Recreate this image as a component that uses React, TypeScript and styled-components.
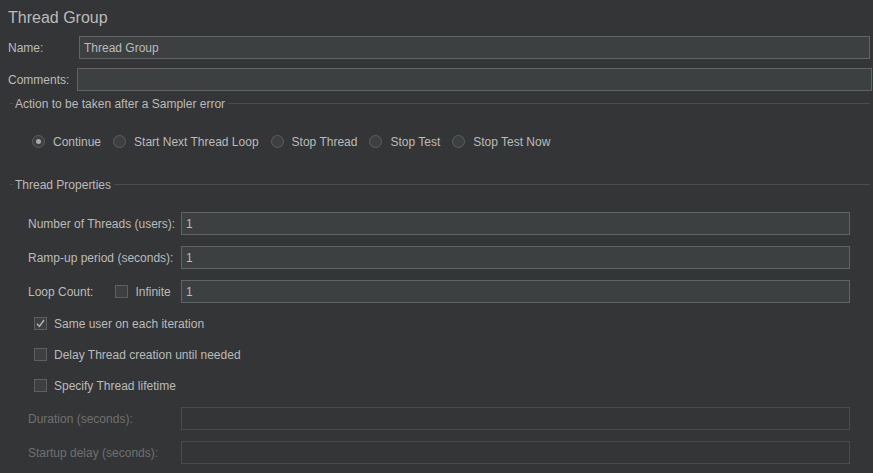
import React from 'react'
import styled, { createGlobalStyle } from 'styled-components'

const GlobalStyle = createGlobalStyle`
  html, body {
    margin: 0;
    padding: 0;
    background: #343536;
  }
  body {
    font-family: "Liberation Sans", Arial, sans-serif;
    font-size: 12px;
    color: #bbbbbb;
  }
`

const Page = styled.div`
  width: 873px;
  height: 473px;
  overflow: hidden;
  background: #343536;
  display: flex;
  flex-direction: column;
`

const Title = styled.div`
  height: 36px;
  line-height: 36px;
  padding-left: 8px;
  font-size: 16px;
  color: #bbbbbb;
`

const TopRow = styled.div<{ $labelWidth: number; $right: number; $gap?: number }>`
  display: grid;
  grid-template-columns: ${p => p.$labelWidth}px 1fr;
  align-items: center;
  padding: 0 ${p => p.$right}px 0 8px;
  margin-top: ${p => p.$gap ?? 0}px;
`

const Label = styled.span<{ $disabled?: boolean }>`
  color: ${p => (p.$disabled ? '#6f7070' : '#bbbbbb')};
  white-space: nowrap;
  padding-top: 1px;
`

const Field = styled.div<{ $disabled?: boolean }>`
  height: 23px;
  box-sizing: border-box;
  border: 1px solid ${p => (p.$disabled ? '#4a4b4c' : '#626364')};
  background: ${p => (p.$disabled ? '#343536' : '#3c4041')};
  padding: 1px 4px 0 4px;
  line-height: 21px;
  color: #bbbbbb;
`

const SectionHeader = styled.div<{ $gap: number }>`
  display: flex;
  align-items: center;
  height: 16px;
  margin-top: ${p => p.$gap}px;
  padding: 0 3px 0 10px;
`

const Dash = styled.div`
  width: 3px;
  height: 1px;
  background: #4b4c4d;
  margin-right: 2px;
`

const Rule = styled.div`
  flex: 1;
  height: 1px;
  background: #4b4c4d;
  margin-left: 3px;
`

const RadioRow = styled.div`
  display: flex;
  align-items: center;
  height: 20px;
  margin-top: 20px;
  padding-left: 32px;
  gap: 12px;
`

const RadioItem = styled.label`
  display: flex;
  align-items: center;
  gap: 8px;
`

const RadioCircle = styled.span<{ $checked?: boolean }>`
  width: 13px;
  height: 13px;
  box-sizing: border-box;
  border-radius: 50%;
  border: 1px solid #5d6061;
  background: #3c4041;
  display: flex;
  align-items: center;
  justify-content: center;
  &::after {
    content: '';
    width: 5px;
    height: 5px;
    border-radius: 50%;
    background: ${p => (p.$checked ? '#a9abac' : 'transparent')};
  }
`

const PropRow = styled.div<{ $gap: number }>`
  display: grid;
  grid-template-columns: 153px 1fr;
  align-items: center;
  padding: 0 23px 0 28px;
  margin-top: ${p => p.$gap}px;
`

const LoopLabel = styled.div`
  display: flex;
  align-items: center;
`

const LoopCheck = styled.div`
  display: flex;
  align-items: center;
  gap: 7px;
  margin-left: 22px;
`

const CheckRow = styled.div<{ $gap: number }>`
  display: flex;
  align-items: center;
  gap: 7px;
  height: 20px;
  padding-left: 34px;
  margin-top: ${p => p.$gap}px;
`

const Box = styled.span`
  width: 13px;
  height: 13px;
  box-sizing: border-box;
  border: 1px solid #5d6061;
  background: #3c4041;
  display: flex;
  align-items: center;
  justify-content: center;
`

const CheckBox: React.FC<{ checked?: boolean }> = ({ checked }) => (
  <Box>
    {checked && (
      <svg width="11" height="11" viewBox="0 0 11 11">
        <path d="M2 5.8 L4.4 8.4 L9 2" fill="none" stroke="#b5b7b8" strokeWidth="1.4" />
      </svg>
    )}
  </Box>
)

const radios = ['Continue', 'Start Next Thread Loop', 'Stop Thread', 'Stop Test', 'Stop Test Now']

const App: React.FC = () => {
  return (
    <Page>
      <GlobalStyle />
      <Title>Thread Group</Title>
      <TopRow $labelWidth={71} $right={3}>
        <Label>Name:</Label>
        <Field>Thread Group</Field>
      </TopRow>
      <TopRow $labelWidth={69} $right={1} $gap={9}>
        <Label>Comments:</Label>
        <Field />
      </TopRow>

      <SectionHeader $gap={4}>
        <Dash />
        <Label>Action to be taken after a Sampler error</Label>
        <Rule />
      </SectionHeader>
      <RadioRow>
        {radios.map((r, i) => (
          <RadioItem key={r}>
            <RadioCircle $checked={i === 0} />
            <Label>{r}</Label>
          </RadioItem>
        ))}
      </RadioRow>

      <SectionHeader $gap={25}>
        <Dash />
        <Label>Thread Properties</Label>
        <Rule />
      </SectionHeader>
      <PropRow $gap={20}>
        <Label>Number of Threads (users):</Label>
        <Field>1</Field>
      </PropRow>
      <PropRow $gap={11}>
        <Label>Ramp-up period (seconds):</Label>
        <Field>1</Field>
      </PropRow>
      <PropRow $gap={11}>
        <LoopLabel>
          <Label>Loop Count:</Label>
          <LoopCheck>
            <CheckBox />
            <Label>Infinite</Label>
          </LoopCheck>
        </LoopLabel>
        <Field>1</Field>
      </PropRow>
      <CheckRow $gap={10}>
        <CheckBox checked />
        <Label>Same user on each iteration</Label>
      </CheckRow>
      <CheckRow $gap={11}>
        <CheckBox />
        <Label>Delay Thread creation until needed</Label>
      </CheckRow>
      <CheckRow $gap={11}>
        <CheckBox />
        <Label>Specify Thread lifetime</Label>
      </CheckRow>
      <PropRow $gap={12}>
        <Label $disabled>Duration (seconds):</Label>
        <Field $disabled />
      </PropRow>
      <PropRow $gap={11}>
        <Label $disabled>Startup delay (seconds):</Label>
        <Field $disabled />
      </PropRow>
    </Page>
  )
}

export default App
